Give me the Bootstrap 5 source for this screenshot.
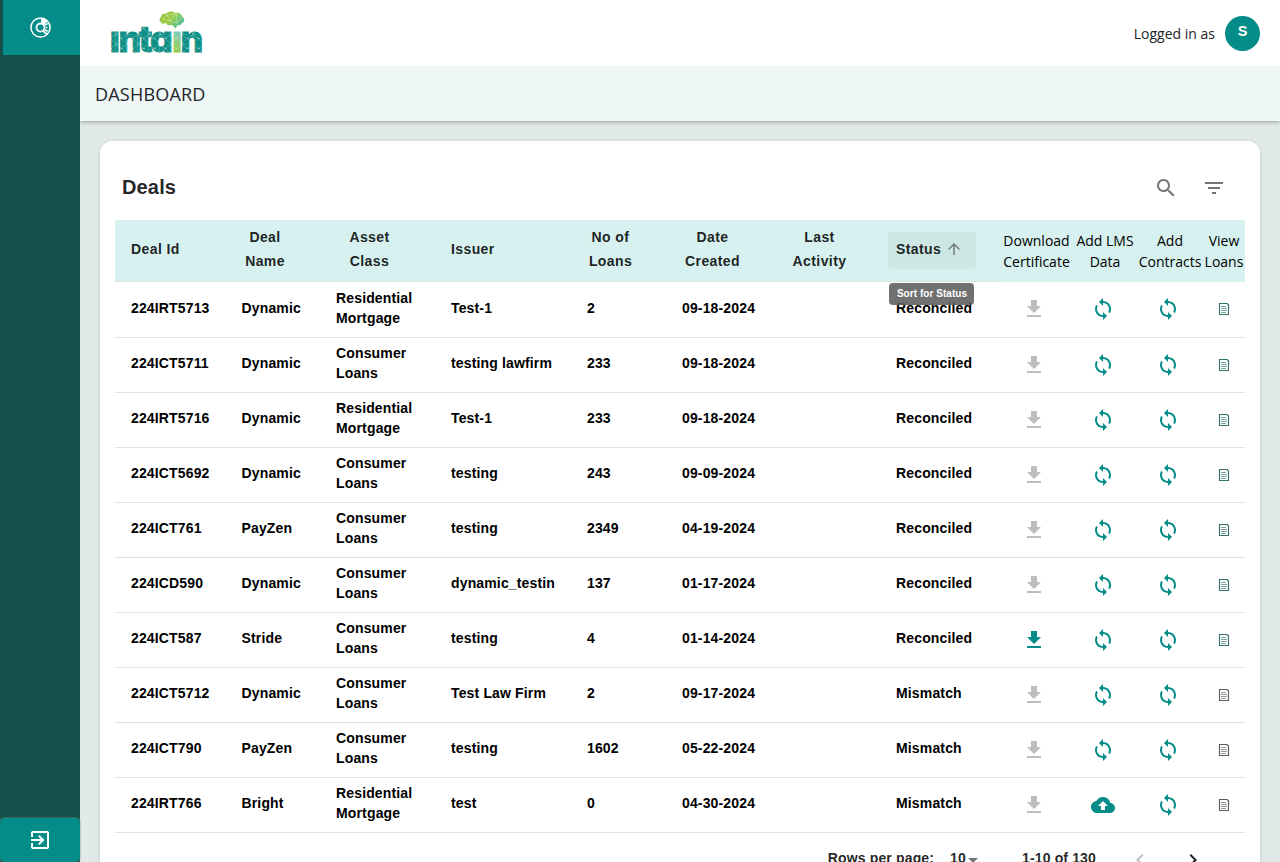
<!DOCTYPE html>
<html lang="en">
<head>
<meta charset="utf-8">
<meta name="viewport" content="width=device-width, initial-scale=1">
<title>Intain - Dashboard</title>
<link href="https://cdn.jsdelivr.net/npm/bootstrap@5.3.0/dist/css/bootstrap.min.css" rel="stylesheet">
<style>
  :root { --teal: #048c88; }
  body { font-family: "Open Sans", "Noto Sans", sans-serif; font-size: 14px; background: #e1eae9; color: #212529; }
  .shell { height: 862px; }
  .side { width: 80px; background: #144f4b; z-index: 3; }
  .side-item { height: 55px; background: var(--teal); border-left: 3px solid #144f4b; color: #fff; }
  .side-exit { height: 44px; background: var(--teal); border-radius: 5px; color: #fff; box-shadow: 0 0 1px 1px rgba(120,150,148,.4); }
  .topbar { height: 66px; padding: 0 20px 0 30px; z-index: 2; }
  .avatar { width: 35px; height: 35px; background: var(--teal); font: 700 14.500px/1 "Liberation Sans", sans-serif; padding-bottom: 3px; }
  .crumb { height: 55px; padding: 2px 0 0 15px; background: #eff6f6; font-size: 18px; font-weight: 500; letter-spacing: .2px; box-shadow: 0 1px 4px rgba(0,0,0,.33); z-index: 1; }
  .panel { margin: 20px 20px 0; padding: 0 15px; height: 721px; border-radius: 12px 12px 0 0; box-shadow: 0 1px 4px rgba(0,0,0,.15); }
  .panel-head { height: 79px; padding: 14px 19px 0 7px; }
  .deals-title { font: 700 20px/1.6 "Liberation Sans", sans-serif; letter-spacing: .15px; color: rgba(0,0,0,.87); padding-bottom: 2px; }
  .tool-icon { width: 24px; height: 24px; fill: #757575; }
  .deals { table-layout: fixed; width: 1130px; border-collapse: separate; border-spacing: 0; font: 700 14px/20px "Liberation Sans", sans-serif; letter-spacing: .15px; color: #000; }
  .deals th { height: 62px; padding: 0 0 4px 16px; background: #d6f1ef; border-bottom: 1px solid #e0e0e0; color: rgba(0,0,0,.87); line-height: 24px; letter-spacing: .4px; vertical-align: middle; }
  .deals th.act { padding: 0 0 1px; border: 0; font: 400 14px/21px "Open Sans", "Noto Sans", sans-serif; letter-spacing: 0; text-align: center; color: #000; white-space: nowrap; }
  .deals td { height: 55px; padding: 0 0 4px 16px; border-bottom: 1px solid #e0e0e0; vertical-align: middle; }
  .deals tbody tr:first-child td { height: 56px; padding-bottom: 4px; }
  .deals td.act { padding: 0; text-align: center; line-height: 0; }
  .deals td.nudge { padding-right: 5px; }
  .deals td.nudge2 { padding-right: 4px; }
  .deals tbody tr:first-child td.act { padding-bottom: 1px; }
  .two { display: block; text-align: center; }
  .w47 { width: 47px; } .w61 { width: 61px; } .w67 { width: 67px; } .w84 { width: 85px; }
  .sorted { width: 88px; height: 37px; margin: 3px 0 0 -8px; padding: 0 0 2px 8px; border-radius: 4px; background: rgba(0,0,0,.04); }
  .sorted svg { margin: -1px 0 0 4px; }
  .sort-tip { left: 1px; top: calc(100% + 14px); width: 85px; height: 22px; padding-left: 1px; border-radius: 4px; background: rgba(97,97,97,.9); color: #fff; font-size: 10px; line-height: 21px; text-align: center; letter-spacing: .05px; white-space: nowrap; }
  .ic { width: 24px; height: 24px; }
  .ic-sm { width: 12px; height: 12px; }
  .off { fill: #bdbdbd; } .on { fill: var(--teal); }
  .pager { height: 50px; padding-right: 40px; font: 700 14px/20px "Liberation Sans", sans-serif; letter-spacing: .15px; color: rgba(0,0,0,.87); }
</style>
</head>
<body class="overflow-hidden">
<svg class="d-none">
  <symbol id="download" viewBox="0 0 24 24"><path d="M19 9h-4V3H9v6H5l7 7 7-7zM5 18v2h14v-2H5z"/></symbol>
  <symbol id="sync" viewBox="0 0 24 24"><path d="M12 4V1L8 5l4 4V6c3.31 0 6 2.69 6 6 0 1.01-.25 1.97-.7 2.8l1.46 1.46C19.54 15.03 20 13.57 20 12c0-4.42-3.58-8-8-8zm0 14c-3.31 0-6-2.69-6-6 0-1.01.25-1.97.7-2.8L5.24 7.74C4.46 8.97 4 10.43 4 12c0 4.42 3.58 8 8 8v3l4-4-4-4v3z"/></symbol>
  <symbol id="upload" viewBox="0 0 24 24"><path d="M19.35 10.04C18.67 6.59 15.64 4 12 4 9.11 4 6.6 5.64 5.35 8.04 2.34 8.36 0 10.91 0 14c0 3.31 2.69 6 6 6h13c2.76 0 5-2.24 5-5 0-2.64-2.05-4.78-4.65-4.96zM14 13v4h-4v-4H7l5-5 5 5h-3z"/></symbol>
  <symbol id="doc" viewBox="0 0 12 12"><path d="M1.500.5h7.500l1.500 1.500v9.500h-9z" fill="none" stroke="currentColor" stroke-width="1.150" stroke-linejoin="round"/><path d="M3 3.500h5M3 5.500h6M3 7.500h6M3 9.500h5" stroke="currentColor" stroke-width=".65"/></symbol>
</svg>

<div class="shell d-flex overflow-hidden">
  <aside class="side position-relative d-flex flex-column justify-content-between flex-shrink-0">
    <a class="side-item d-flex align-items-center justify-content-center" href="#" aria-label="Dashboard">
      <svg width="21" height="21" viewBox="0 0 22 22" fill="none" stroke="currentColor" style="margin-right:2px">
        <circle cx="11" cy="11" r="10" stroke-width="1.600"/>
        <circle cx="11" cy="11" r="4.200" stroke-width="1.900"/>
        <path d="M11.600 1.200v5.200l3.200 2 4-4.400C17 2.300 14 1.200 11.600 1.200z" fill="currentColor" stroke="none"/>
        <path d="M13.500 14.500l4.500 3.700" stroke-width="1.800"/>
        <path d="M15.500 8.500l3-1.800M15.500 13.500l3 1.500M16.500 11h1.800" stroke-width="1.800"/>
      </svg>
    </a>
    <a class="side-exit d-flex align-items-center justify-content-center" href="#" aria-label="Log out">
      <svg width="24" height="24" viewBox="0 0 24 24" fill="currentColor"><path d="M10.090 15.590L11.500 17l5-5-5-5-1.410 1.410L12.670 11H3v2h9.670l-2.580 2.590zM19 3H5c-1.110 0-2 .9-2 2v4h2V5h14v14H5v-4H3v4c0 1.100.89 2 2 2h14c1.100 0 2-.9 2-2V5c0-1.100-.9-2-2-2z"/></svg>
    </a>
  </aside>

  <div class="flex-grow-1">
    <header class="topbar bg-white position-relative d-flex align-items-center justify-content-between">
      <svg width="96" height="56" viewBox="0 0 96 56" role="img" aria-label="intain">
        <defs>
          <linearGradient id="stem" x1="0" y1="0" x2="0" y2="1"><stop offset=".35" stop-color="#7dcdb5"/><stop offset=".8" stop-color="#9acb3c"/></linearGradient>
          <linearGradient id="brain" x1="0" y1="0" x2="1" y2=".6"><stop offset="0" stop-color="#8cc63f"/><stop offset=".5" stop-color="#9fcb45"/><stop offset="1" stop-color="#4dbf9c"/></linearGradient>
          <pattern id="mesh" width="11" height="10" patternUnits="userSpaceOnUse"><path d="M0 3l6 6 5-6-6-3zM6 9l-1-9M6 9l5 1" stroke="#fff" stroke-width=".4" stroke-opacity=".5" fill="none"/><circle cx="6" cy="9" r=".6" fill="#fff" fill-opacity=".8"/><circle cx="1" cy="3.500" r=".5" fill="#fff" fill-opacity=".8"/></pattern>
        </defs>
        <text transform="translate(1.200 0) scale(.97 1)" y="47.500" x="-1.500 7.500 28.500 40 62.700 71.500" font-family="Inter, sans-serif" font-weight="800" font-size="37" fill="#0d8f86" stroke="#0d8f86" stroke-width="1">ıntɑ<tspan fill="url(#stem)" stroke="url(#stem)">ı</tspan>n</text>
        <path d="M51 17c-2-1-2-4 0-5 0-3 3-4 5-3 2-3 7-3 9-1 4-1 7 1 7 4 3 1 3 5 0 6-1 2-3 3-5 2l-1 4-4-4c-3 1-5 0-6-2-3 1-5 1-5-1z" fill="url(#brain)"/>
        <path d="M52 14l5-4 3 6 6-7 5 5-4 4-7-2-8-2M57 10l9-1M66 9l1 9" fill="none" stroke="#fff" stroke-width=".4" stroke-opacity=".8"/>
        <rect y="20" width="96" height="36" fill="url(#mesh)"/>
      </svg>
      <div class="d-flex align-items-center">
        <span style="margin:1px 10px 0 0">Logged in as</span>
        <span class="avatar rounded-circle text-white d-flex align-items-center justify-content-center">S</span>
      </div>
    </header>
    <div class="crumb position-relative d-flex align-items-center">DASHBOARD</div>

    <main class="panel bg-white overflow-hidden">
      <div class="panel-head d-flex align-items-center justify-content-between">
        <h1 class="deals-title m-0">Deals</h1>
        <div class="d-flex gap-4">
          <svg class="tool-icon" viewBox="0 0 24 24"><path d="M15.500 14h-.79l-.28-.27C15.410 12.590 16 11.110 16 9.500 16 5.910 13.090 3 9.500 3S3 5.910 3 9.500 5.910 16 9.500 16c1.610 0 3.090-.59 4.230-1.570l.27.28v.79l5 4.990L20.490 19l-4.990-5zm-6 0C7.010 14 5 11.990 5 9.500S7.010 5 9.500 5 14 7.010 14 9.500 11.990 14 9.500 14z"/></svg>
          <svg class="tool-icon" viewBox="0 0 24 24"><path d="M10 18h4v-2h-4v2zM3 6v2h18V6H3zm3 7h12v-2H6v2z"/></svg>
        </div>
      </div>

      <table class="deals">
        <colgroup>
          <col style="width:110.5px"><col style="width:94.5px"><col style="width:115px"><col style="width:136px"><col style="width:95px"><col style="width:95px"><col style="width:119px"><col style="width:120px"><col style="width:73px"><col style="width:64px"><col style="width:66px"><col style="width:42px">
        </colgroup>
        <thead>
          <tr>
            <th>Deal Id</th>
            <th><span class="two w47">Deal<br>Name</span></th>
            <th><span class="two w67">Asset<br>Class</span></th>
            <th>Issuer</th>
            <th><span class="two w47">No of<br>Loans</span></th>
            <th><span class="two w61">Date<br>Created</span></th>
            <th><span class="two w84">Last<br>Activity</span></th>
            <th>
              <div class="sorted position-relative d-flex align-items-center">Status
                <svg width="18" height="18" viewBox="0 0 24 24" fill="#707c7b"><path d="M4 12l1.410 1.410L11 7.830V20h2V7.830l5.580 5.590L20 12l-8-8-8 8z"/></svg>
                <div class="sort-tip position-absolute">Sort for Status</div>
              </div>
            </th>
            <th class="act">Download<br>Certificate</th>
            <th class="act">Add LMS<br>Data</th>
            <th class="act">Add<br>Contracts</th>
            <th class="act">View<br>Loans</th>
          </tr>
        </thead>
        <tbody id="deal-rows"></tbody>
      </table>

      <div class="pager d-flex align-items-center justify-content-end">
        <span>Rows per page:</span>
        <span class="ms-3">10</span>
        <svg width="14" height="24" viewBox="5 0 14 24" fill="#757575" style="margin-top:4px"><path d="M7 10l5 5 5-5z"/></svg>
        <span style="margin-left:42px">1-10 of 130</span>
        <svg class="ic off" viewBox="0 0 24 24" style="margin-left:32px;margin-top:3px"><path d="M15.410 7.410L14 6l-6 6 6 6 1.410-1.410L10.830 12z"/></svg>
        <svg class="ic" viewBox="0 0 24 24" fill="#212121" style="margin-left:29px;margin-top:3px"><path d="M10 6L8.590 7.410 13.170 12l-4.580 4.590L10 18l6-6z"/></svg>
      </div>
    </main>
  </div>
</div>

<script src="https://cdn.jsdelivr.net/npm/bootstrap@5.3.0/dist/js/bootstrap.bundle.min.js"></script>
<script>
  const RM = 'Residential<br>Mortgage', CL = 'Consumer<br>Loans';
  const deals = [
    ['224IRT5713', 'Dynamic', RM, 'Test-1', '2', '09-18-2024', 'Reconciled'],
    ['224ICT5711', 'Dynamic', CL, 'testing lawfirm', '233', '09-18-2024', 'Reconciled'],
    ['224IRT5716', 'Dynamic', RM, 'Test-1', '233', '09-18-2024', 'Reconciled'],
    ['224ICT5692', 'Dynamic', CL, 'testing', '243', '09-09-2024', 'Reconciled'],
    ['224ICT761', 'PayZen', CL, 'testing', '2349', '04-19-2024', 'Reconciled'],
    ['224ICD590', 'Dynamic', CL, 'dynamic_testin', '137', '01-17-2024', 'Reconciled'],
    ['224ICT587', 'Stride', CL, 'testing', '4', '01-14-2024', 'Reconciled', { ready: true }],
    ['224ICT5712', 'Dynamic', CL, 'Test Law Firm', '2', '09-17-2024', 'Mismatch'],
    ['224ICT790', 'PayZen', CL, 'testing', '1602', '05-22-2024', 'Mismatch'],
    ['224IRT766', 'Bright', RM, 'test', '0', '04-30-2024', 'Mismatch', { upload: true }]
  ];
  const icon = (name, cls) => `<svg class="${cls}"><use href="#${name}"/></svg>`;
  document.getElementById('deal-rows').innerHTML = deals.map(([id, name, asset, issuer, loans, date, status, flags = {}]) => `
    <tr>
      <td>${id}</td><td>${name}</td><td>${asset}</td><td>${issuer}</td><td>${loans}</td><td>${date}</td><td></td><td>${status}</td>
      <td class="act nudge">${icon('download', 'ic ' + (flags.ready ? 'on' : 'off'))}</td>
      <td class="act nudge2">${icon(flags.upload ? 'upload' : 'sync', 'ic on')}</td>
      <td class="act nudge2">${icon('sync', 'ic on')}</td>
      <td class="act" style="color:${status === 'Mismatch' ? '#5c5c5c' : '#35706c'}">${icon('doc', 'ic-sm')}</td>
    </tr>`).join('');
</script>
</body>
</html>
